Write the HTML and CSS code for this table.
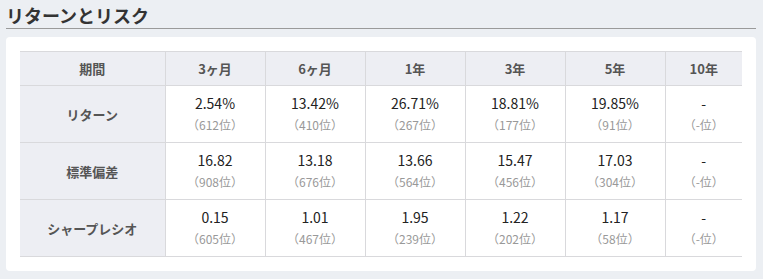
FILE: index.html
```html
<!DOCTYPE html>
<html lang="ja">
<head>
<meta charset="utf-8">
<link rel="stylesheet" href="styles.css">
</head>
<body>
<div class="page">
  <h2 class="title">リターンとリスク</h2>
  <div class="card">
    <table class="rr">
      <colgroup>
        <col class="c-label"><col class="c-num"><col class="c-num"><col class="c-num"><col class="c-num"><col class="c-num"><col class="c-last">
      </colgroup>
      <thead>
        <tr><th>期間</th><th>3ヶ月</th><th>6ヶ月</th><th>1年</th><th>3年</th><th>5年</th><th>10年</th></tr>
      </thead>
      <tbody>
        <tr>
          <th>リターン</th>
          <td><span class="v">2.54%</span><span class="r">（612位）</span></td>
          <td><span class="v">13.42%</span><span class="r">（410位）</span></td>
          <td><span class="v">26.71%</span><span class="r">（267位）</span></td>
          <td><span class="v">18.81%</span><span class="r">（177位）</span></td>
          <td><span class="v">19.85%</span><span class="r">（91位）</span></td>
          <td><span class="v">-</span><span class="r">（-位）</span></td>
        </tr>
        <tr>
          <th>標準偏差</th>
          <td><span class="v">16.82</span><span class="r">（908位）</span></td>
          <td><span class="v">13.18</span><span class="r">（676位）</span></td>
          <td><span class="v">13.66</span><span class="r">（564位）</span></td>
          <td><span class="v">15.47</span><span class="r">（456位）</span></td>
          <td><span class="v">17.03</span><span class="r">（304位）</span></td>
          <td><span class="v">-</span><span class="r">（-位）</span></td>
        </tr>
        <tr>
          <th>シャープレシオ</th>
          <td><span class="v">0.15</span><span class="r">（605位）</span></td>
          <td><span class="v">1.01</span><span class="r">（467位）</span></td>
          <td><span class="v">1.95</span><span class="r">（239位）</span></td>
          <td><span class="v">1.22</span><span class="r">（202位）</span></td>
          <td><span class="v">1.17</span><span class="r">（58位）</span></td>
          <td><span class="v">-</span><span class="r">（-位）</span></td>
        </tr>
      </tbody>
    </table>
  </div>
</div>
</body>
</html>
```
FILE: styles.css
```css
html, body {
  margin: 0;
  padding: 0;
  background: #eceff3;
}
body {
  font-family: "Noto Sans CJK JP", "Noto Sans", sans-serif;
  color: #333;
}
.page {
  padding: 3px 7px 0 6px;
}
.title {
  margin: 0;
  font-size: 18px;
  line-height: 24px;
  font-weight: 700;
  color: #333;
  padding-bottom: 1px;
  border-bottom: 1px solid #9a9a9a;
}
.card {
  margin-top: 8px;
  background: #fff;
  border-radius: 4px;
  padding: 14px 14px 14px;
}
.rr {
  border-collapse: collapse;
  width: 722px;
  table-layout: fixed;
}
.c-label { width: 145px; }
.c-num { width: 100px; }
.c-last { width: 77px; }
.rr th, .rr td {
  border: 1px solid #d9d9dc;
  text-align: center;
  padding: 0;
}
.rr tr > :first-child { border-left: none; }
.rr tr > :last-child { border-right: none; }
.rr th {
  background: #edeef3;
  font-weight: 700;
  font-size: 13px;
  color: #555;
}
.rr thead th {
  height: 33px;
}
.rr tbody th, .rr tbody td {
  height: 56px;
}
.rr td {
  background: #fff;
}
.v {
  display: block;
  font-size: 14px;
  line-height: 19px;
  color: #222;
}
.r {
  display: block;
  font-size: 12px;
  line-height: 19px;
  color: #999;
  margin-top: 2px;
}
```
